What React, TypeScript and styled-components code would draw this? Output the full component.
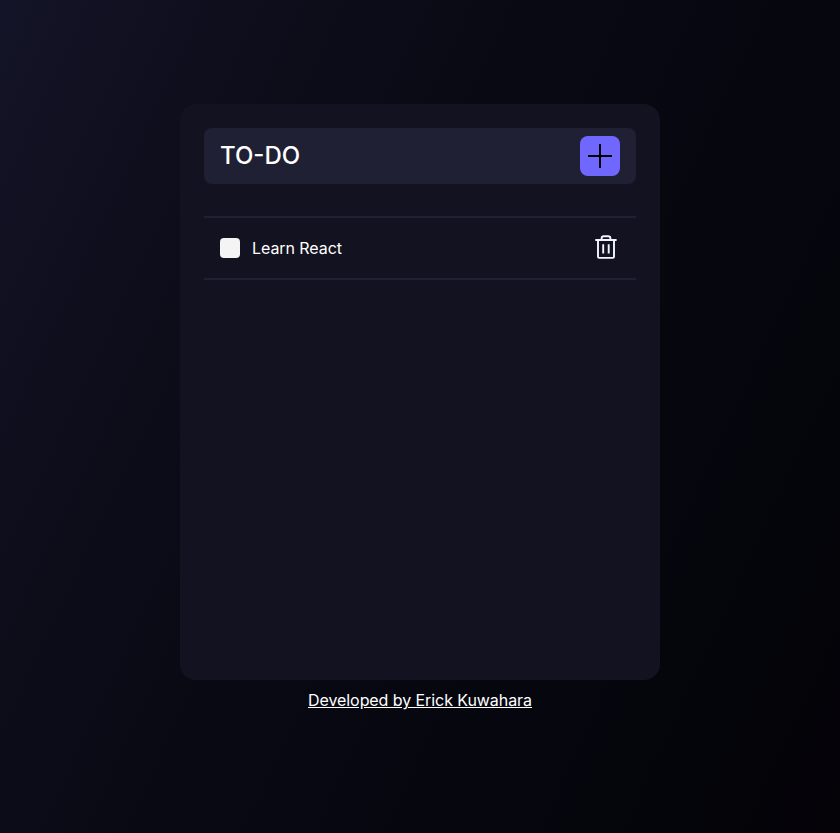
import React, { useState } from "react";
import styled, { createGlobalStyle } from "styled-components";

const GlobalStyle = createGlobalStyle`
  * { box-sizing: border-box; margin: 0; padding: 0; }
  body {
    font-family: "Inter", sans-serif;
    color: #fff;
    background: #050308;
  }
`;

const Page = styled.div`
  min-height: 100vh;
  display: flex;
  flex-direction: column;
  align-items: center;
  padding-top: 104px;
  background: linear-gradient(115deg, #141428 0%, #0e0d1b 22%, #090913 45%, #06060f 68%, #04050a 86%, #050208 100%);
`;

const Card = styled.main`
  width: 480px;
  height: 576px;
  padding: 24px;
  border-radius: 16px;
  background: #131221;
`;

const Header = styled.header`
  height: 56px;
  padding: 0 16px;
  display: flex;
  align-items: center;
  justify-content: space-between;
  border-radius: 8px;
  background: #202034;
`;

const Title = styled.h1`
  padding-bottom: 2px;
  font-size: 24px;
  line-height: 29px;
  font-weight: 500;
`;

const IconButton = styled.button`
  display: flex;
  align-items: center;
  justify-content: center;
  border: 0;
  background: none;
  cursor: pointer;
`;

const AddButton = styled(IconButton)`
  width: 40px;
  height: 40px;
  border-radius: 8px;
  background: #7067ff;
`;

const List = styled.ul`
  margin-top: 32px;
  list-style: none;
  border-top: 2px solid #202034;
`;

const Item = styled.li`
  height: 62px;
  padding: 0 16px;
  display: flex;
  align-items: center;
  border-bottom: 2px solid #202034;
`;

const Check = styled.input`
  appearance: none;
  width: 20px;
  height: 20px;
  border-radius: 4px;
  background: #f4f4f4;
  cursor: pointer;
  &:checked { background: #7067ff; }
`;

const Label = styled.label`
  flex: 1;
  margin-left: 12px;
  font-size: 16px;
  line-height: 20px;
  letter-spacing: -0.07px;
`;

const DeleteButton = styled(IconButton)`
  width: 28px;
  height: 28px;
`;

const Credit = styled.a`
  margin-top: 10px;
  font-size: 16px;
  line-height: 20px;
  letter-spacing: -0.07px;
  color: #fff;
  text-decoration: underline;
`;

const PlusIcon = () => (
  <svg width="24" height="24" viewBox="0 0 24 24" stroke="#000" strokeWidth="2">
    <path d="M12 0V24M0 12H24" />
  </svg>
);

const TrashIcon = () => (
  <svg width="28" height="28" viewBox="0 0 28 28" fill="none" stroke="#f2f7ff" strokeWidth="1.9" strokeLinecap="round" strokeLinejoin="round">
    <path d="M4 6H23.9M6 6V22.7Q6 23.9 7.2 23.9H20.8Q22 23.9 22 22.7V6" />
    <path d="M9.6 6V4.6Q9.6 2.3 11.9 2.3H16.1Q18.4 2.3 18.4 4.6V6" />
    <path d="M11.2 10.2V19.4M16.7 10.2V19.4" strokeLinecap="butt" />
  </svg>
);

export default function App() {
  const [tasks, setTasks] = useState([{ id: 1, text: "Learn React" }]);
  return (
    <>
      <GlobalStyle />
      <Page>
        <Card>
          <Header>
            <Title>TO-DO</Title>
            <AddButton aria-label="Add task"><PlusIcon /></AddButton>
          </Header>
          <List>
            {tasks.map(({ id, text }) => (
              <Item key={id}>
                <Check type="checkbox" id={`task-${id}`} />
                <Label htmlFor={`task-${id}`}>{text}</Label>
                <DeleteButton aria-label="Delete task" onClick={() => setTasks(tasks.filter((t) => t.id !== id))}>
                  <TrashIcon />
                </DeleteButton>
              </Item>
            ))}
          </List>
        </Card>
        <Credit href="#">Developed by Erick Kuwahara</Credit>
      </Page>
    </>
  );
}
